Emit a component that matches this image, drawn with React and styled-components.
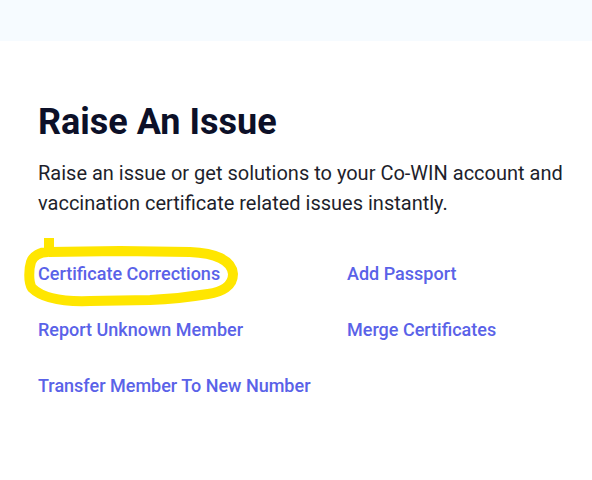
import React from "react";
import styled, { createGlobalStyle } from "styled-components";

const GlobalStyle = createGlobalStyle`
  * { box-sizing: border-box; }
  body {
    margin: 0;
    background: #ffffff;
    font-family: Roboto, "Liberation Sans", sans-serif;
  }
`;

const issues = [
  "Certificate Corrections",
  "Add Passport",
  "Report Unknown Member",
  "Merge Certificates",
  "Transfer Member To New Number",
];

const App = () => {
  return (
    <Page>
      <GlobalStyle />
      <TopBand />
      <Section>
        <Title>Raise An Issue</Title>
        <Lead>
          Raise an issue or get solutions to your Co-WIN account and
          vaccination certificate related issues instantly.
        </Lead>
        <IssueGrid>
          {issues.map((label) => (
            <IssueLink key={label} href="#">
              {label}
            </IssueLink>
          ))}
        </IssueGrid>
      </Section>
      {/* hand drawn highlight round the first link */}
      <Scribble viewBox="0 0 592 480">
        <path d="M49 238 L49 252 L120 251 L190 252 C215 253 232 260 233 274 C233 286 222 292 208 294 C190 297 175 299 150 300 L90 301 C62 302 42 298 32 288 C28 282 29 268 31 262 C33 256 40 252 48 252" />
      </Scribble>
    </Page>
  );
};

export default App;

const Page = styled.div`
  position: relative;
  width: 592px;
  height: 480px;
  overflow: hidden;
`;

const TopBand = styled.div`
  height: 41px;
  background: #f6fbff;
`;

const Section = styled.section`
  display: flex;
  flex-direction: column;
  padding: 59px 10px 0 38px;
`;

const Title = styled.h1`
  margin: 0;
  font-size: 36px;
  line-height: 44px;
  font-weight: 700;
  color: #0c1028;
`;

const Lead = styled.p`
  margin: 14px 0 0;
  font-size: 20px;
  line-height: 30px;
  font-weight: 400;
  color: #1e1f2c;
`;

const IssueGrid = styled.div`
  display: grid;
  grid-template-columns: 309px 1fr;
  row-gap: 32px;
  margin-top: 44px;
`;

const IssueLink = styled.a`
  font-size: 18px;
  line-height: 24px;
  font-weight: 500;
  color: #5a62e8;
  text-decoration: none;
  justify-self: start;
`;

const Scribble = styled.svg`
  position: absolute;
  inset: 0;
  width: 592px;
  height: 480px;
  pointer-events: none;

  & path {
    fill: none;
    stroke: #ffe600;
    stroke-width: 10;
    stroke-linejoin: round;
    stroke-linecap: butt;
  }
`;
